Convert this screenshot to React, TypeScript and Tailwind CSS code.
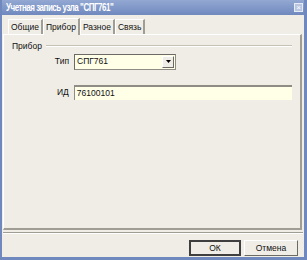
export default function App() {
  const font = { fontFamily: '"Liberation Sans", Arial, sans-serif' };
  return (
    <div className="w-[307px] h-[260px] bg-[#6f89bf] pl-[2px] pr-[3px] flex flex-col text-[8.5px] text-[#111]" style={font}>
      {/* title bar */}
      <div className="h-[15px] flex items-center justify-between pl-[4px] pr-[1px] bg-gradient-to-b from-[#93a8d2] to-[#7089be]">
        <span className="inline-block origin-left scale-x-[0.8] text-white font-bold text-[10px] tracking-[-0.6px] whitespace-nowrap">Учетная запись узла "СПГ761"</span>
        <div className="w-[9px] h-[9px] border border-[#e6ebf5] bg-[#b9c6e2] flex items-center justify-center text-[8px] leading-none text-white">×</div>
      </div>

      <div className="flex-1 bg-[#efede6] flex flex-col">
        {/* tabs */}
        <div className="flex items-end pl-[6px] pt-[3px] h-[19px]">
          <div className="h-[15px] px-[2px] flex items-center border-t border-l border-[#ffffff] border-r-2 border-r-[#a09e94]">Общие</div>
          <div className="h-[17px] px-[2px] flex items-center border-t border-l border-[#ffffff] border-r-2 border-r-[#a09e94] bg-[#efede6] -mb-[1px] relative z-10">Прибор</div>
          <div className="h-[15px] px-[2px] flex items-center border-t border-l border-[#ffffff] border-r-2 border-r-[#a09e94]">Разное</div>
          <div className="h-[15px] px-[2px] flex items-center border-t border-l border-[#ffffff] border-r-2 border-r-[#a09e94]">Связь</div>
        </div>

        {/* tab panel */}
        <div className="ml-[1px] mr-[2px] h-[196px] border-t border-l border-[#ffffff] border-r-2 border-r-[#a09e94] border-b-2 border-b-[#a09e94] pt-[5px] px-[8px]">
          <div className="flex items-center">
            <span className="mr-[4px]">Прибор</span>
            <div className="flex-1 h-[2px] border-t border-[#c5c2b4] border-b border-b-white" />
          </div>

          <div className="mt-[1px] flex items-center">
            <span className="w-[62px] text-right pr-[5px]">Тип</span>
            <div className="w-[102px] h-[16px] border border-[#8e8c84] border-t-[#6b6a64] border-l-[#6b6a64] bg-[#ffffe8] flex items-center">
              <span className="flex-1 pl-[2px]">СПГ761</span>
              <div className="w-[12px] h-[12px] mr-[1px] bg-[#efede6] border border-white border-r-[#6b6a64] border-b-[#6b6a64] flex items-center justify-center">
                <svg width="5" height="3" viewBox="0 0 5 3"><path d="M0 0h5L2.5 3z" fill="#000" /></svg>
              </div>
            </div>
          </div>

          <div className="mt-[15px] flex items-center">
            <span className="w-[62px] text-right pr-[5px]">ИД</span>
            <div className="w-[219px] h-[15px] border-t-2 border-t-[#8e8c84] border-l border-l-[#8e8c84] bg-[#ffffe8] flex items-center pl-[2px]">76100101</div>
          </div>
        </div>

        {/* bottom */}
        <div className="mt-[2px] mx-[1px] h-[2px] border-t border-[#a09e94] border-b border-b-white" />
        <div className="flex justify-end gap-[3px] pr-[6px] mt-[6px]">
          <div className="w-[52px] h-[16px] border-2 border-[#3f3f3f] bg-[#efede6] flex items-center justify-center">ОК</div>
          <div className="w-[54px] h-[16px] border border-white border-r-[#6b6a64] border-b-[#6b6a64] bg-[#efede6] flex items-center justify-center">Отмена</div>
        </div>
      </div>
      <div className="h-[3px]" />
    </div>
  );
}
